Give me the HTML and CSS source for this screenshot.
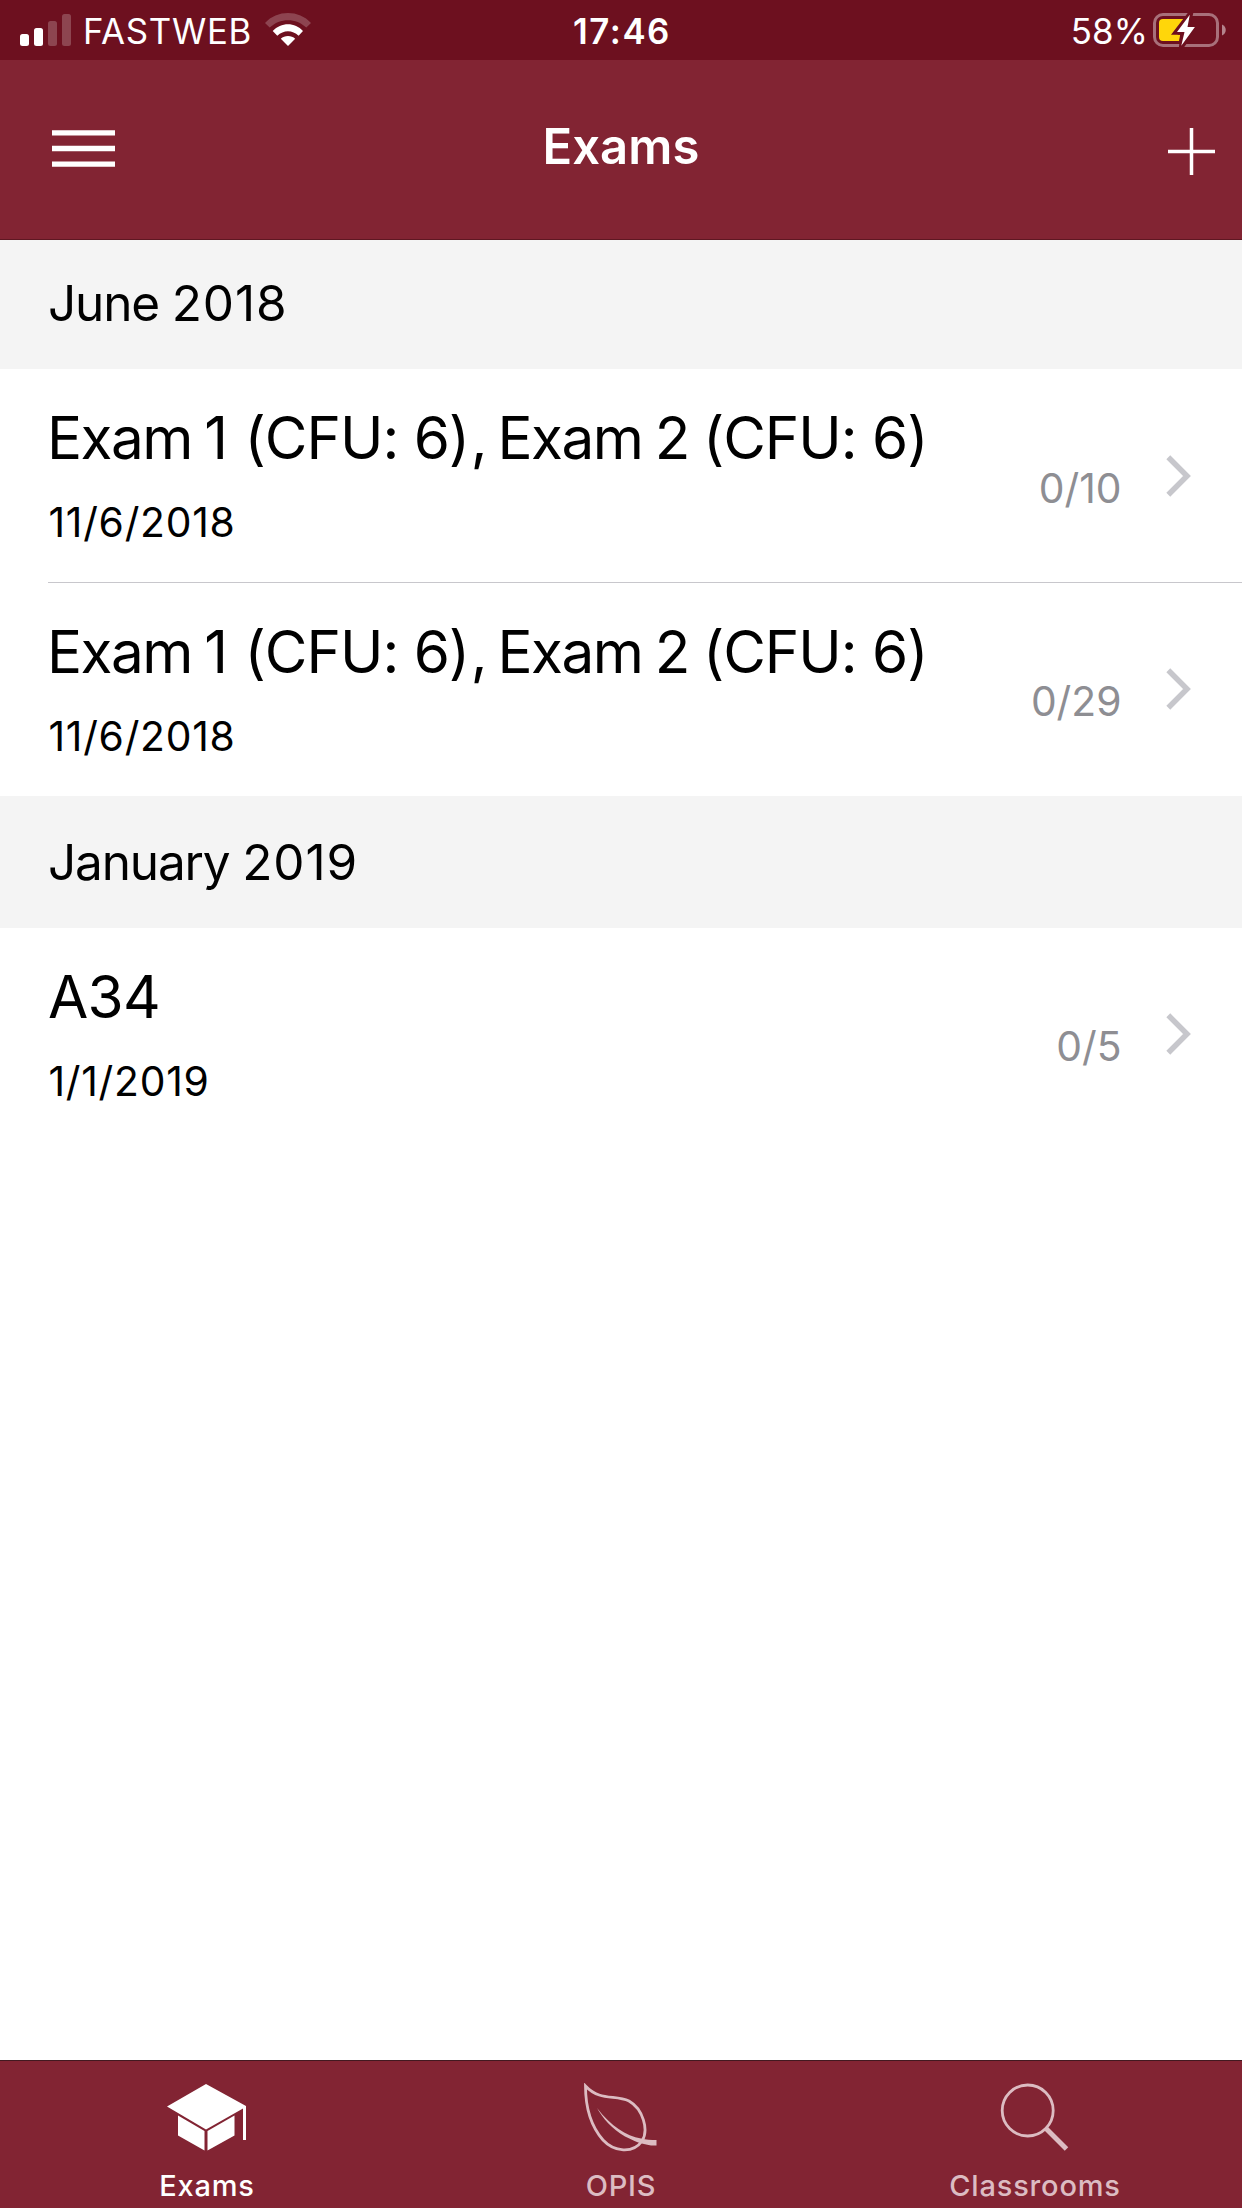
FILE: index.html
```
<!DOCTYPE html>
<html lang="en">
<head>
<meta charset="utf-8">
<title>Exams</title>
<link rel="stylesheet" href="styles.css">
</head>
<body>
<div class="app">
  <header>
    <div class="status">
      <div class="carrier">
        <svg class="signal" viewBox="0 0 51 32" width="51" height="32"><rect y="20" width="9" height="12" rx="2.5"/><rect x="14" y="14" width="9" height="18" rx="2.5"/><g opacity=".22"><rect x="28" y="7" width="9" height="25" rx="2.5"/><rect x="42" width="9" height="32" rx="2.5"/></g></svg>
        <span class="carrier-name">FASTWEB</span>
        <svg class="wifi" viewBox="0 0 46 33" width="46" height="33"><path opacity=".22" d="M0 10C12-3.300 34-3.300 46 10L41.300 14.500C31 4.700 15 4.700 4.700 14.500Z"/><path d="M7.700 18C16 9 30 9 38 18L33.600 22.800C27.500 16.700 18.500 16.700 12.300 22.800Z"/><path d="M15.800 25.800C19.500 22.200 26.500 22.200 30.200 25.800L23 33Z"/></svg>
      </div>
      <span class="clock">17:46</span>
      <div class="power">
        <span class="percent">58%</span>
        <svg class="battery" viewBox="0 0 73 36" width="73" height="36"><rect x="1.500" y="2.500" width="63" height="31" rx="8.500" fill="none" stroke="#a8707a" stroke-width="3"/><path d="M69 12.500C74 14.500 74 21.500 69 23.500Z" fill="#b4838c"/><path d="M10 7H36L20 29H10Q6 29 6 25V11Q6 7 10 7Z" fill="#ffd60a"/><path d="M20 22.800H27.200L26 29H15Z" fill="#ffd60a"/><path d="M35.500 0L18 22.800H27.400L25.800 36H30.500L47 13.500H37.500L40.500 0Z" fill="#6d101f"/><path d="M36.800 2.800L24 20H31.500L28.300 33.800L41.900 15H34.500Z"/></svg>
      </div>
    </div>
    <nav class="navbar">
      <svg class="menu" viewBox="0 0 63 38" width="63" height="38"><path d="M0 .3H63V5.600H0ZM0 15.800H63V21.200H0ZM0 31.500H63V36.800H0Z"/></svg>
      <h1 class="title">Exams</h1>
      <svg class="add" viewBox="0 0 47 47" width="47" height="47"><path d="M0 23.500H47M23.500 0V47"/></svg>
    </nav>
  </header>
  <main>
    <h2 class="section">June <span class="year">2018</span></h2>
    <div class="row row-divided">
      <div class="info"><div class="name"><span class="course">Exam 1</span> <span class="cfu">(CFU: 6)</span><span class="sep">, </span><span class="course">Exam 2</span> <span class="cfu">(CFU: 6)</span></div><div class="date">11/6/2018</div></div>
      <div class="side"><span class="count">0/10</span><svg class="chevron" viewBox="0 0 26 42" width="26" height="42"><path d="M2.300 2.300L21 21L2.300 39.700"/></svg></div>
    </div>
    <div class="row">
      <div class="info"><div class="name"><span class="course">Exam 1</span> <span class="cfu">(CFU: 6)</span><span class="sep">, </span><span class="course">Exam 2</span> <span class="cfu">(CFU: 6)</span></div><div class="date">11/6/2018</div></div>
      <div class="side"><span class="count">0/29</span><svg class="chevron" viewBox="0 0 26 42" width="26" height="42"><path d="M2.300 2.300L21 21L2.300 39.700"/></svg></div>
    </div>
    <h2 class="section section-tall">January <span class="year">2019</span></h2>
    <div class="row">
      <div class="info"><div class="name name-short">A34</div><div class="date">1/1/2019</div></div>
      <div class="side"><span class="count">0/5</span><svg class="chevron" viewBox="0 0 26 42" width="26" height="42"><path d="M2.300 2.300L21 21L2.300 39.700"/></svg></div>
    </div>
  </main>
  <footer class="tabs">
    <div class="tab tab-active">
      <svg viewBox="0 0 80 70" width="80" height="70"><path d="M0 23.500L39 1L79 23V57H76V25.500L39 46.500ZM11 32.500L37.500 48V67.500L11 52.500ZM67.500 32.500L40.500 48V67.500L67.500 52.500Z"/></svg>
      <span>Exams</span>
    </div>
    <div class="tab">
      <svg viewBox="0 0 80 70" width="80" height="70"><path class="line" d="M4.500 3C19 18.500 34 11.500 48 18C62 26 68 47 61 58C52 71 33 69 22 57C8 41 4.500 19 4.500 3Z"/><path d="M16 25C30 43 45 53 60 55.500C65 57 70 57 75.500 57V62.500H70C60 61 53 58 44 53.500C31 46 21.500 35 16 25Z"/></svg>
      <span>OPIS</span>
    </div>
    <div class="tab">
      <svg viewBox="0 0 80 70" width="80" height="70"><circle class="line" cx="32.700" cy="27.500" r="25.500"/><path class="handle" d="M50.500 45L71.500 66"/></svg>
      <span>Classrooms</span>
    </div>
  </footer>
</div>
</body>
</html>
```
FILE: styles.css
```
* { box-sizing: border-box; }
body { margin: 0; background: #fff; font-family: Inter, "Liberation Sans", sans-serif; color: #000; }
h1, h2 { margin: 0; }
svg { display: block; flex: none; fill: #fff; }
.app { width: 1242px; height: 2208px; display: flex; flex-direction: column; overflow: hidden; }

/* Status bar */
.status { height: 60px; display: grid; grid-template-columns: 1fr auto 1fr; background: #6d101f; color: #fff; font-size: 34.8px; line-height: 40px; padding-top: 11px; }
.carrier { display: flex; padding-left: 20px; }
.signal { margin-top: 3px; }
.carrier-name { margin-left: 12px; letter-spacing: .69px; }
.wifi { margin: 2px 0 0 13px; }
.clock { margin-left: 2px; font-weight: 600; letter-spacing: 1.53px; }
.power { display: flex; justify-content: flex-end; padding-right: 16px; }
.percent { letter-spacing: .16px; margin-right: 5px; }
.battery { margin-top: 1px; }

/* Navigation bar */
.navbar { height: 180px; display: grid; grid-template-columns: 1fr auto 1fr; padding: 0 27px 0 52px; background: #822433; border-bottom: 1px solid #5e1722; color: #fff; }
.menu { margin-top: 70px; }
.title { margin: 57px 0 0 -25px; font-size: 49px; line-height: 60px; font-weight: 600; letter-spacing: .07px; }
.add { margin-top: 68px; justify-self: end; fill: none; stroke: #fff; stroke-width: 3.5; }

/* Exam list */
main { flex: 1; }
.section { height: 129px; padding: 33px 48px 0; background: #f4f4f4; font-size: 49.5px; line-height: 60px; font-weight: 400; letter-spacing: -1.15px; }
.section-tall { height: 132px; padding-top: 36px; }
.year { letter-spacing: .85px; }
.row { height: 213px; display: flex; justify-content: space-between; align-items: flex-start; margin-left: 48px; padding: 33px 50px 0 0; }
.row-divided { height: 214px; border-bottom: 1px solid #c8c7cc; }
.name { font-size: 58.4px; line-height: 72px; letter-spacing: -1.5px; white-space: nowrap; margin-left: -1px; }
.name-short { letter-spacing: -.68px; margin-left: 0; }
.course { word-spacing: -2.5px; }
.cfu { margin-left: 3px; letter-spacing: -1px; }
.cfu:last-child { margin-left: -1px; }
.sep { margin-left: 1.5px; letter-spacing: -3.2px; }
.date { margin: 23px 0 0 .5px; font-size: 40.8px; line-height: 50px; letter-spacing: .74px; }
.side { display: flex; align-items: flex-start; }
.row-divided .side { padding-top: 1px; }
.count { margin: 60px 44.5px 0 0; font-size: 40.8px; line-height: 50px; color: #8e8e93; }
.chevron { margin-top: 52px; fill: none; stroke: #c7c7cc; stroke-width: 5.5; }

/* Tab bar */
.tabs { height: 148px; display: grid; grid-template-columns: repeat(3, 1fr); background: #822433; border-top: 1px solid #421920; color: #dcbcc2; }
.tab { display: flex; flex-direction: column; align-items: center; padding-top: 22px; font-size: 29px; line-height: 36px; font-weight: 500; letter-spacing: .81px; }
.tab svg { fill: #dcbcc2; }
.tab span { margin-top: 15px; }
.tab-active { color: #fff; }
.tab-active svg { fill: #fff; }
.tab .line { fill: none; stroke: #dcbcc2; stroke-width: 2.8; }
.tab .handle { stroke: #dcbcc2; stroke-width: 5; }
```
